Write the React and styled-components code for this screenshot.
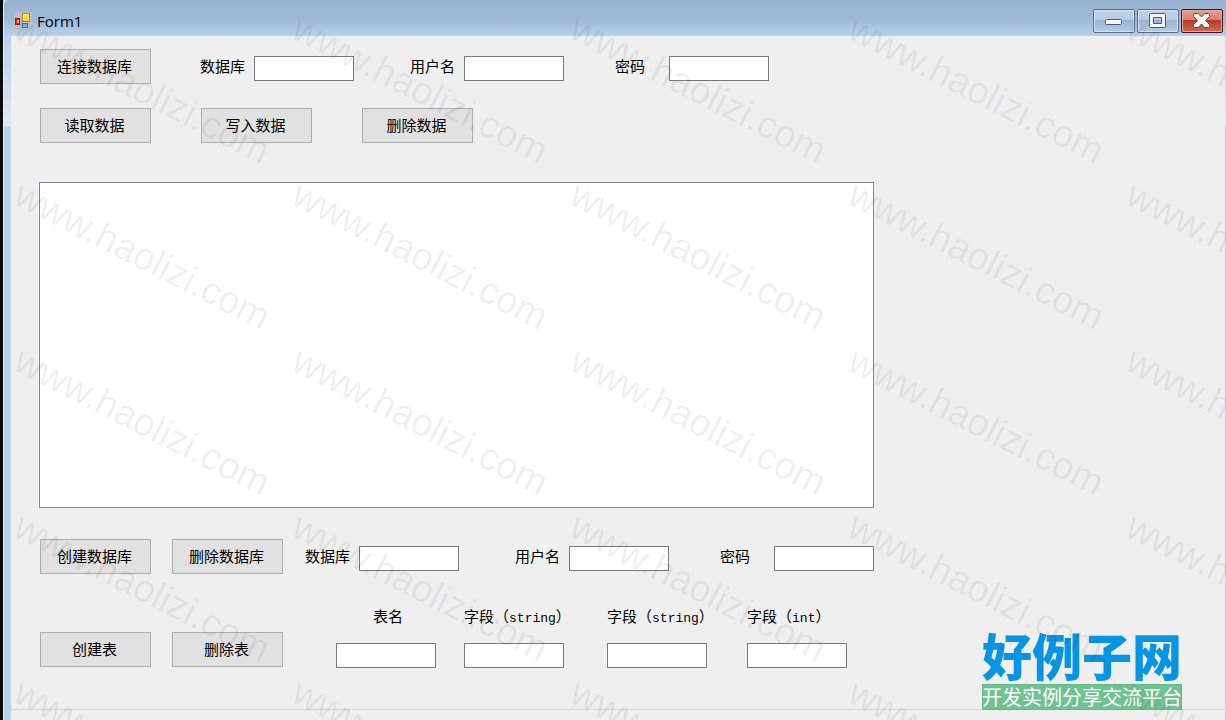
import React from "react";
import styled, { createGlobalStyle, css } from "styled-components";

const GlobalStyle = createGlobalStyle`
  * { box-sizing: border-box; }
  body {
    margin: 0;
    color: #000;
    font-family: "Liberation Sans", "Noto Sans CJK SC", sans-serif;
  }
`;

const Window = styled.div`
  position: relative;
  display: flex;
  flex-direction: column;
  min-height: 100vh;
  overflow: hidden;
  background: #b9d1ea;
  border-left: 3px solid #0b0b0d;
`;

const TitleBar = styled.header`
  display: flex;
  align-items: center;
  height: 36px;
  padding: 6px 3px 0 10px;
  border-left: 1px solid #e6f0fa;
  border-top-left-radius: 5px;
  background: linear-gradient(#99b4d1 0, #9fbad7 20px, #b9d1ea 36px);
`;

const Title = styled.h1`
  flex: 1;
  margin: 0 0 0 5px;
  font: 400 15px/20px "Open Sans", "Noto Sans", sans-serif;
`;

const WindowButtons = styled.div`
  display: flex;
  gap: 2px;
`;

const WindowButton = styled.button`
  display: block;
  width: 42px;
  height: 24px;
  padding: 0;
  border: 1px solid #596b86;
  border-radius: 2px;
  background: linear-gradient(#bfd3e9 0, #b5cbe4 10px, #98b3d0 10px, #b5cce5 22px);
  box-shadow: inset 0 0 0 1px #d4e3f3;

  ${(p) =>
    p.$close &&
    css`
      border-color: #43141c;
      background: linear-gradient(#e5a093 0, #d67e6f 10px, #b83a22 10px, #cf6a55 22px);
      box-shadow: inset 0 0 0 1px #e8a99c;
    `}

  svg { display: block; margin: 0 auto; }
`;

const Frame = styled.div`
  flex: 1;
  display: flex;
  padding: 0 1px 0 7px;
  border-left: 1px solid #e6f0fa;
  background: linear-gradient(#b9d1ea 0, #dfe9f5 90px, #b9d1ea 90px);
`;

const Client = styled.main`
  flex: 1;
  display: flex;
  flex-direction: column;
  background: #efefef;
`;

const Form = styled.form`
  flex: 1;
  padding: 13px 28px 20px;
`;

const Row = styled.div`
  display: flex;
  align-items: flex-start;
  margin: ${(p) => p.$top || 0}px 0 0 1px;
`;

const Buttons = styled.div`
  display: flex;
  gap: ${(p) => p.$gap || 21}px;
  padding-top: ${(p) => p.$top || 0}px;
`;

const PushButton = styled.button`
  width: 111px;
  height: 35px;
  padding: 0 2px 2px 0;
  border: 1px solid #adadad;
  background: #e1e1e1;
  color: #000;
  font: 15px/20px "Noto Sans CJK SC", sans-serif;
`;

const Field = styled.div`
  display: flex;
  gap: 9px;
  padding-top: 7px;
  margin-left: ${(p) => p.$before}px;
`;

const Label = styled.label`
  width: 45px;
  height: 20px;
  font: 15px/20px "Noto Sans CJK SC", sans-serif;
  white-space: nowrap;
`;

const TextBox = styled.input`
  display: block;
  width: 100px;
  height: 25px;
  padding: 2px 4px;
  border: 1px solid #7a7a7a;
  border-radius: 0;
  background: #fff;
  font: 15px/20px "Noto Sans CJK SC", sans-serif;
`;

const Output = styled.textarea`
  display: block;
  width: 100%;
  max-width: 835px;
  height: 326px;
  margin-top: 39px;
  border: 1px solid #828790;
  border-radius: 0;
  background: #fff;
  resize: none;
`;

const Columns = styled.div`
  display: grid;
  grid-template-columns: 128px 143px 140px 100px;
  margin-left: 53px;
`;

const Column = styled.div`
  display: flex;
  flex-direction: column;
  gap: 17px;
`;

const ColumnLabel = styled(Label)`
  width: 100px;
  padding-left: ${(p) => (p.$center ? 4 : 0)}px;
  text-align: ${(p) => (p.$center ? "center" : "left")};
`;

const Latin = styled.span`
  font-family: "Liberation Mono", monospace;
  font-size: 13px;
  line-height: 1;
`;

const StatusStrip = styled.footer`
  height: 11px;
  border-top: 1px solid #d5d5d5;
`;

const Brand = styled.div`
  position: absolute;
  right: 44px;
  bottom: 10px;
  width: 200px;
  font-family: "Noto Sans CJK SC", sans-serif;
  white-space: nowrap;
`;

const BrandName = styled.div`
  padding-bottom: 4px;
  color: #0794e2;
  font-size: 50px;
  font-weight: 900;
  line-height: 52px;
`;

const BrandLine = styled.div`
  border: 1px solid #62b986;
  background: #6fc292;
  color: #fff;
  font-size: 20px;
  line-height: 24px;
  text-indent: -1px;
`;

const Watermarks = styled.div`
  position: absolute;
  inset: 0;
  display: grid;
  grid-template-columns: repeat(5, 278px);
  grid-auto-rows: 166px;
  padding: 4px 0 0 8px;
  overflow: hidden;
  pointer-events: none;
`;

const Watermark = styled.span`
  color: rgba(0, 0, 0, 0.065);
  font-size: 38px;
  line-height: 40px;
  white-space: nowrap;
  transform: rotate(27deg);
  transform-origin: 0 34px;
`;

function AppIcon() {
  return (
    <svg width="18" height="18" viewBox="0 0 18 18" aria-hidden="true">
      <rect width="18" height="18" fill="#bcc0c6" />
      <rect x="1.5" y="6.5" width="4" height="6" fill="#c9301c" stroke="#a31a10" />
      <rect x="3" y="8" width="2" height="3" fill="#f2a293" />
      <rect x="8.500" y="1.500" width="7" height="8" fill="#ffd73d" stroke="#b88509" />
      <path d="M9.500 8V2.500H14" fill="none" stroke="#fff0a0" />
      <rect x="8.500" y="11.500" width="5" height="4" fill="#78a9f5" stroke="#3569c8" />
    </svg>
  );
}

function MinimizeIcon() {
  return (
    <svg width="40" height="22" viewBox="0 0 40 22" aria-hidden="true">
      <rect x="11.500" y="9.500" width="16" height="5" rx="1" fill="#f5f5f5" stroke="#52596a" />
    </svg>
  );
}

function MaximizeIcon() {
  return (
    <svg width="40" height="22" viewBox="0 0 40 22" aria-hidden="true">
      <path
        d="M12.500 3.500h14q1 0 1 1v12q0 1-1 1h-14q-1 0-1-1v-12q0-1 1-1Z M15.500 7.500v6h8v-6Z"
        fill="#f3f3f3"
        fillRule="evenodd"
        stroke="#52596a"
      />
    </svg>
  );
}

function CloseIcon() {
  return (
    <svg width="40" height="22" viewBox="0 0 40 22" aria-hidden="true">
      <path
        d="M12.500 3.500h4l3 3.500 3-3.500h4l1 1v2l-4 4 4 4v2l-1 1h-4l-3-3.500-3 3.500h-4l-1-1v-2l4-4-4-4v-2Z"
        fill="#f5f5f5"
        stroke="#53495a"
      />
    </svg>
  );
}

function LabeledBox({ id, label, before, type = "text" }) {
  return (
    <Field $before={before}>
      <Label htmlFor={id}>{label}</Label>
      <TextBox id={id} type={type} />
    </Field>
  );
}

function ColumnBox({ id, label, latin, center }) {
  return (
    <Column>
      <ColumnLabel htmlFor={id} $center={center}>
        {label}
        {latin && (
          <>
            （<Latin>{latin}</Latin>）
          </>
        )}
      </ColumnLabel>
      <TextBox id={id} type="text" />
    </Column>
  );
}

export default function App() {
  return (
    <>
      <GlobalStyle />
      <Window>
        <TitleBar>
          <AppIcon />
          <Title>Form1</Title>
          <WindowButtons>
            <WindowButton type="button" aria-label="Minimize">
              <MinimizeIcon />
            </WindowButton>
            <WindowButton type="button" aria-label="Maximize">
              <MaximizeIcon />
            </WindowButton>
            <WindowButton type="button" aria-label="Close" $close>
              <CloseIcon />
            </WindowButton>
          </WindowButtons>
        </TitleBar>
        <Frame>
          <Client>
            <Form onSubmit={(e) => e.preventDefault()}>
              <Row>
                <PushButton type="button">连接数据库</PushButton>
                <LabeledBox id="db" label="数据库" before={49} />
                <LabeledBox id="user" label="用户名" before={56} />
                <LabeledBox id="pass" label="密码" before={51} type="password" />
              </Row>
              <Row $top={24}>
                <Buttons $gap={50}>
                  <PushButton type="button">读取数据</PushButton>
                  <PushButton type="button">写入数据</PushButton>
                  <PushButton type="button">删除数据</PushButton>
                </Buttons>
              </Row>
              <Output aria-label="数据" readOnly />
              <Row $top={31}>
                <Buttons>
                  <PushButton type="button">创建数据库</PushButton>
                  <PushButton type="button">删除数据库</PushButton>
                </Buttons>
                <LabeledBox id="new-db" label="数据库" before={22} />
                <LabeledBox id="new-user" label="用户名" before={56} />
                <LabeledBox id="new-pass" label="密码" before={51} type="password" />
              </Row>
              <Row $top={32}>
                <Buttons $top={26}>
                  <PushButton type="button">创建表</PushButton>
                  <PushButton type="button">删除表</PushButton>
                </Buttons>
                <Columns>
                  <ColumnBox id="table" label="表名" center />
                  <ColumnBox id="field-1" label="字段" latin="string" />
                  <ColumnBox id="field-2" label="字段" latin="string" />
                  <ColumnBox id="field-3" label="字段" latin="int" />
                </Columns>
              </Row>
            </Form>
            <StatusStrip />
          </Client>
        </Frame>
        <Brand>
          <BrandName>好例子网</BrandName>
          <BrandLine>开发实例分享交流平台</BrandLine>
        </Brand>
        <Watermarks aria-hidden="true">
          {Array.from({ length: 25 }, (_, i) => (
            <Watermark key={i}>www.haolizi.com</Watermark>
          ))}
        </Watermarks>
      </Window>
    </>
  );
}
